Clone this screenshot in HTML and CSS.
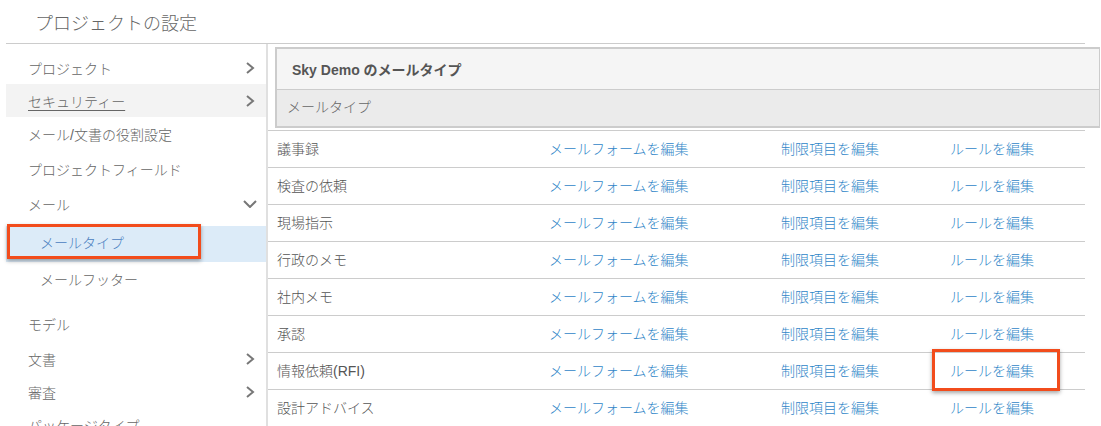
FILE: index.html
```html
<!DOCTYPE html>
<html lang="ja">
  <head>
    <title>プロジェクトの設定</title>
    <meta name="viewport" content="width=device-width, initial-scale=1" />
    <link rel="stylesheet" href="styles.css">
  </head>
  <body>
    <div class="pagina">
      <div class="titulo">プロジェクトの設定</div>

      <div class="contenedor">
        <div class="menu">
          <div class="item h33">プロジェクト
            <svg class="flecha" width="10" height="12" viewBox="0 0 10 12"><polyline points="2,1 8,6 2,11" /></svg>
          </div>
          <div class="item h33 gris"><span class="subrayado">セキュリティー</span>
            <svg class="flecha" width="10" height="12" viewBox="0 0 10 12"><polyline points="2,1 8,6 2,11" /></svg>
          </div>
          <div class="item h33">メール/文書の役割設定</div>
          <div class="item h37">プロジェクトフィールド</div>
          <div class="item h34">メール
            <svg class="flecha abajo" width="14" height="8" viewBox="0 0 14 8"><polyline points="1,1 7,7 13,1" /></svg>
          </div>
          <div class="submenu">
            <div class="subitem activo">メールタイプ<span class="marco-rojo"></span></div>
            <div class="subitem">メールフッター</div>
          </div>
          <div class="item h36">モデル</div>
          <div class="item h33">文書
            <svg class="flecha" width="10" height="12" viewBox="0 0 10 12"><polyline points="2,1 8,6 2,11" /></svg>
          </div>
          <div class="item h33">審査
            <svg class="flecha" width="10" height="12" viewBox="0 0 10 12"><polyline points="2,1 8,6 2,11" /></svg>
          </div>
          <div class="item h28">パッケージタイプ</div>
        </div>

        <div class="contenido">
          <div class="panel">
            <div class="panel-cabecera">Sky Demo のメールタイプ</div>
            <div class="panel-columna">メールタイプ</div>
          </div>

          <div class="tabla">
            <div class="fila">
              <span class="nombre">議事録</span>
              <a class="enlace">メールフォームを編集</a>
              <a class="enlace">制限項目を編集</a>
              <a class="enlace">ルールを編集</a>
            </div>
            <div class="fila">
              <span class="nombre">検査の依頼</span>
              <a class="enlace">メールフォームを編集</a>
              <a class="enlace">制限項目を編集</a>
              <a class="enlace">ルールを編集</a>
            </div>
            <div class="fila">
              <span class="nombre">現場指示</span>
              <a class="enlace">メールフォームを編集</a>
              <a class="enlace">制限項目を編集</a>
              <a class="enlace">ルールを編集</a>
            </div>
            <div class="fila">
              <span class="nombre">行政のメモ</span>
              <a class="enlace">メールフォームを編集</a>
              <a class="enlace">制限項目を編集</a>
              <a class="enlace">ルールを編集</a>
            </div>
            <div class="fila">
              <span class="nombre">社内メモ</span>
              <a class="enlace">メールフォームを編集</a>
              <a class="enlace">制限項目を編集</a>
              <a class="enlace">ルールを編集</a>
            </div>
            <div class="fila">
              <span class="nombre">承認</span>
              <a class="enlace">メールフォームを編集</a>
              <a class="enlace">制限項目を編集</a>
              <a class="enlace">ルールを編集</a>
            </div>
            <div class="fila">
              <span class="nombre">情報依頼(RFI)</span>
              <a class="enlace">メールフォームを編集</a>
              <a class="enlace">制限項目を編集</a>
              <a class="enlace marcado">ルールを編集<span class="marco-rojo2"></span></a>
            </div>
            <div class="fila">
              <span class="nombre">設計アドバイス</span>
              <a class="enlace">メールフォームを編集</a>
              <a class="enlace">制限項目を編集</a>
              <a class="enlace">ルールを編集</a>
            </div>
          </div>
        </div>
      </div>
    </div>
  </body>
</html>
```

FILE: styles.css
```css
body {
  margin: 0;
  background-color: #fff;
  font-family: "Liberation Sans", "Noto Sans CJK JP", sans-serif;
  font-weight: 300;
  overflow: hidden;
}

.pagina {
  width: 1079px;
  margin-left: 6px;
}

.titulo {
  height: 44px;
  line-height: 40px;
  padding-top: 4px;
  padding-left: 29px;
  font-size: 18px;
  color: #666;
  border-bottom: 1px solid #ccc;
  box-sizing: border-box;
}

.contenedor {
  display: flex;
  flex-direction: row;
}

.menu {
  width: 262px;
  flex-shrink: 0;
  padding-top: 7px;
  border-right: 2px solid #e0e0e0;
  box-sizing: border-box;
  height: 400px;
}

.item {
  display: flex;
  align-items: center;
  justify-content: space-between;
  padding-left: 22px;
  padding-right: 11px;
  font-size: 14px;
  color: #666;
}

.h28 { height: 27px; align-items: flex-end; }
.h33 { height: 33px; }
.h34 { height: 34px; }
.h36 { height: 36px; }
.h37 { height: 37px; }

.gris {
  background-color: #f3f3f3;
}

.subrayado {
  text-decoration: underline;
  text-underline-offset: 3px;
}

.flecha polyline {
  fill: none;
  stroke: #777;
  stroke-width: 2;
}

.abajo {
  margin-right: -2px;
}

.submenu {
  padding: 5px 0 6px;
}

.subitem {
  position: relative;
  height: 36px;
  line-height: 35px;
  padding-left: 34px;
  font-size: 14px;
  color: #666;
}

.subitem + .subitem {
  height: 38px;
  line-height: 37px;
}

.activo {
  background-color: #dcebf8;
  color: #4a80c0;
}

.marco-rojo {
  position: absolute;
  left: 1px;
  top: -2px;
  width: 194px;
  height: 35px;
  border: 3px solid #f24c1c;
  box-sizing: border-box;
  box-shadow: 0 2px 4px rgba(0, 0, 0, 0.35);
}

.contenido {
  flex: 1;
  min-width: 0;
}

.panel {
  margin: 3px -15px 0 7px;
  border: 2px solid #ccc;
  border-right-width: 1px;
}

.panel-cabecera {
  height: 40px;
  line-height: 42px;
  padding-left: 15px;
  background-color: #f5f5f5;
  border-bottom: 1px solid #ccc;
  font-size: 14px;
  font-weight: bold;
  color: #555;
}

.panel-columna {
  height: 36px;
  line-height: 35px;
  padding-left: 10px;
  background-color: #ebebeb;
  font-size: 14px;
  color: #666;
}

.tabla {
  margin-top: 2px;
  border-top: 1px solid #ccc;
}

.fila {
  display: grid;
  grid-template-columns: 272px 232px 169px 1fr;
  align-items: center;
  height: 37px;
  padding-left: 9px;
  padding-bottom: 2px;
  border-bottom: 1px solid #ccc;
  box-sizing: border-box;
  font-size: 14px;
}

.nombre {
  color: #555;
}

.enlace {
  color: #2f86c8;
  cursor: pointer;
}

.marcado {
  position: relative;
}

.marco-rojo2 {
  position: absolute;
  left: -18px;
  top: -11px;
  width: 128px;
  height: 42px;
  border: 3px solid #f24c1c;
  box-sizing: border-box;
  box-shadow: 0 2px 4px rgba(0, 0, 0, 0.35);
}
```
